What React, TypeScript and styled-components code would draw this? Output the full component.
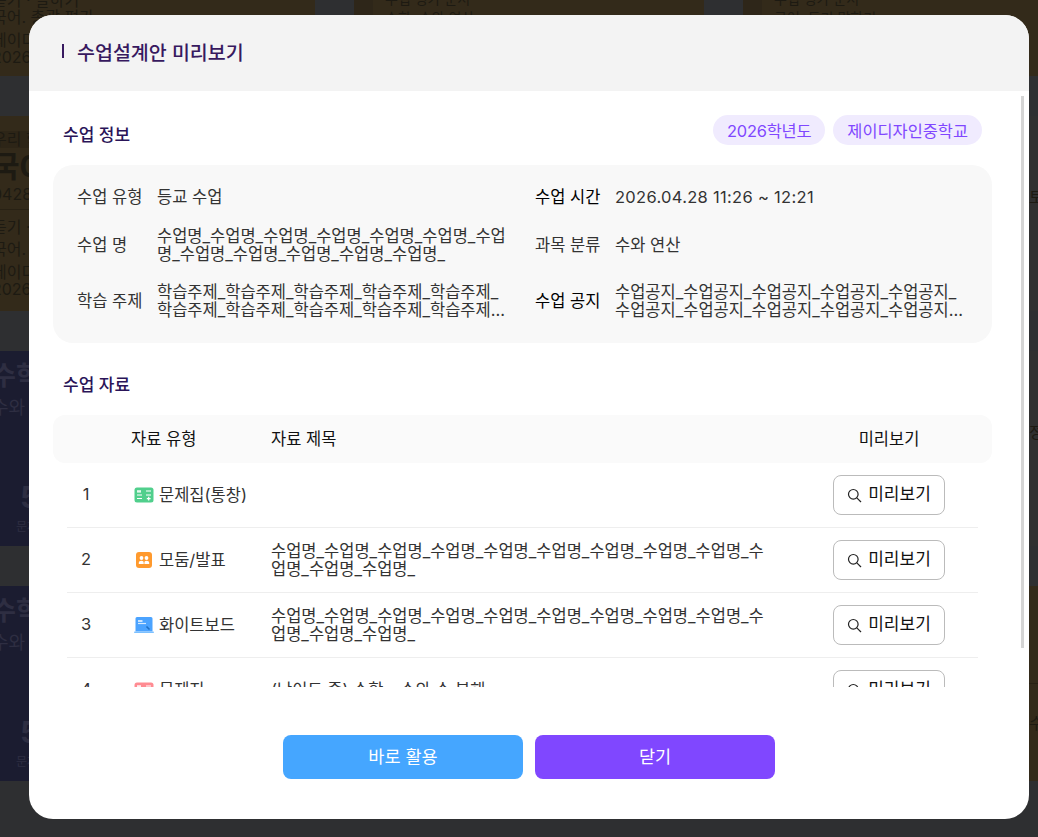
import styled, { createGlobalStyle } from "styled-components";

const GlobalStyle = createGlobalStyle`
  html, body {
    margin: 0;
    height: 100%;
    background: #2e2f31;
    font-family: "Inter", "Noto Sans CJK KR", sans-serif;
  }
  * {
    box-sizing: border-box;
  }
`;

const Page = styled.div`
  position: relative;
  width: 1038px;
  height: 837px;
  overflow: hidden;
  background: #2e2f31;
`;

// the dimmed dashboard behind the dialog
const BackGrid = styled.div`
  display: grid;
  grid-template-columns: repeat(3, 350px);
  grid-auto-rows: 195px;
  column-gap: 39px;
  row-gap: 40px;
  margin-left: -35px;
  margin-top: -119px;
  color: #1d1a12;
`;

const tones = {
  brown: "#332a1a",
  navy: "#1b1c30",
  gray: "#303030",
};

const BackCard = styled.div<{ $tone: keyof typeof tones; $inset?: number }>`
  background: ${(p) => tones[p.$tone]};
  border-left: 19px solid ${(p) => (p.$tone === "brown" ? "#2e2619" : "rgba(0,0,0,0.08)")};
  padding: 12px 0 0 ${(p) => p.$inset ?? 8}px;
  overflow: hidden;
  white-space: nowrap;
`;

const BackLine = styled.div<{ $size?: number; $bold?: boolean; $top?: number; $left?: number; $dim?: boolean; $band?: boolean }>`
  font-size: ${(p) => p.$size ?? 16}px;
  font-weight: ${(p) => (p.$bold ? 700 : 400)};
  margin-top: ${(p) => p.$top ?? 0}px;
  padding-left: ${(p) => p.$left ?? 0}px;
  line-height: ${(p) => (p.$size && p.$size > 20 ? "1.2" : "17px")};
  color: ${(p) => (p.$dim ? "#2e2e42" : "inherit")};
  background: ${(p) => (p.$band ? "rgba(0,0,0,0.1)" : "none")};
`;

const BackRule = styled.div<{ $top: number }>`
  height: 1px;
  margin-top: ${(p) => p.$top}px;
  background: rgba(0, 0, 0, 0.2);
`;

const Overlay = styled.div`
  position: absolute;
  inset: 0;
`;

const Modal = styled.div`
  position: relative;
  display: flex;
  flex-direction: column;
  width: 1000px;
  height: 804px;
  margin: 15px 0 0 29px;
  background: #fff;
  border-radius: 24px;
  overflow: hidden;
`;

const ModalHeader = styled.div`
  display: flex;
  align-items: center;
  gap: 13px;
  flex: 0 0 76px;
  padding: 0 0 4px 33px;
  background: #f3f3f3;
`;

const TitleBar = styled.span`
  width: 2px;
  height: 14px;
  background: #37195f;
`;

const ModalTitle = styled.h2`
  margin: 0;
  font-size: 19.5px;
  font-weight: 500;
  color: #37195f;
`;

const ModalBody = styled.div`
  flex: 0 0 596px;
  padding-top: 24px;
  overflow: hidden;
`;

const ScrollThumb = styled.div`
  position: absolute;
  left: 992px;
  top: 81px;
  width: 3px;
  height: 552px;
  background: #d4d4d4;
`;

const SectionHead = styled.div<{ $top?: number }>`
  display: flex;
  align-items: center;
  justify-content: space-between;
  height: 30px;
  margin-top: ${(p) => p.$top ?? 0}px;
  padding: 0 47px 0 34px;
`;

const SectionTitle = styled.h3`
  margin: 6px 0 0;
  font-size: 17px;
  font-weight: 500;
  color: #2a1458;
`;

const Chips = styled.div`
  display: flex;
  gap: 8px;
`;

const Chip = styled.span<{ $tight?: boolean }>`
  display: flex;
  align-items: center;
  height: 30px;
  padding: 0 14px 1px;
  border-radius: 15px;
  background: #f0ebfe;
  color: #8047ff;
  font-size: 16.4px;
  letter-spacing: ${(p) => (p.$tight ? "-0.2px" : "0")};
`;

const InfoCard = styled.div`
  display: grid;
  grid-template-columns: 429px 429px;
  grid-template-rows: 24px 40px 40px;
  gap: 16px 29px;
  height: 178px;
  margin: 20px 37px 0 24px;
  padding: 20px 24px 22px;
  border-radius: 20px;
  background: #f8f8f8;
`;

const InfoItem = styled.div`
  display: flex;
  align-items: center;
  color: #333;
  font-size: 16.5px;
  line-height: 18px;
`;

const InfoLabel = styled.span<{ $bold?: boolean }>`
  flex: 0 0 80px;
  color: ${(p) => (p.$bold ? "#000" : "#333")};
`;

const InfoValue = styled.span<{ $spaced?: boolean }>`
  flex: 1;
  min-width: 0;
  display: -webkit-box;
  -webkit-box-orient: vertical;
  -webkit-line-clamp: 2;
  overflow: hidden;
  letter-spacing: ${(p) => (p.$spaced ? "0.3px" : "0")};
`;

const TableHead = styled.div`
  display: grid;
  grid-template-columns: 78px 140px 1fr 112px;
  align-items: center;
  height: 48px;
  margin: 20px 37px 0 24px;
  padding: 0 47px 3px 0;
  border-radius: 12px;
  background: #fafafa;
  color: #111;
  font-size: 16.5px;
`;

const HeadCenter = styled.span`
  text-align: center;
`;

const RowList = styled.div`
  margin: 0 51px 0 38px;
`;

const Row = styled.div`
  display: grid;
  grid-template-columns: 67px 137px 1fr 112px;
  align-items: center;
  height: 65px;
  padding-right: 33px;
  border-bottom: 1px solid #eee;
  color: #333;
  font-size: 16.5px;
  line-height: 18px;
`;

const RowNo = styled.span`
  width: 38px;
  padding-bottom: 2px;
  text-align: center;
`;

const TypeCell = styled.span`
  display: flex;
  align-items: center;
  gap: 5px;
`;

const RowName = styled.span`
  max-width: 500px;
`;

const PreviewButton = styled.button`
  display: flex;
  align-items: center;
  justify-content: center;
  gap: 6px;
  width: 112px;
  height: 40px;
  padding: 0;
  border: 1px solid #bbb;
  border-radius: 8px;
  background: #fff;
  color: #111;
  font-family: inherit;
  font-size: 17px;
`;

const PreviewLabel = styled.span`
  padding-bottom: 6px;
`;

const ModalFooter = styled.div`
  display: flex;
  justify-content: center;
  gap: 12px;
  padding-top: 48px;
`;

const FooterButton = styled.button<{ $purple?: boolean }>`
  width: 240px;
  height: 44px;
  padding: 0 0 4px;
  border: 0;
  border-radius: 8px;
  background: ${(p) => (p.$purple ? "#8047ff" : "#45a6ff")};
  color: #fff;
  font-family: inherit;
  font-size: 17.5px;
`;

const SearchIcon = () => (
  <svg width="15" height="15" viewBox="0 0 15 15" fill="none" stroke="#222" strokeWidth="1.2">
    <circle cx="6.3" cy="6.3" r="4.8" />
    <path d="M9.8 9.8 L14 14" />
  </svg>
);

const BookIcon = ({ color }: { color: string }) => (
  <svg width="20" height="16" viewBox="0 0 20 16">
    <rect x="0.5" y="0.5" width="19" height="15" rx="2.5" fill={color} />
    <path d="M3 3.2h4v2.4h-4z" fill="#fff" opacity="0.85" />
    <path d="M12 4h5M3 8h5M12 8h5M3 11.5h5" stroke="#fff" strokeWidth="1.2" />
    <path d="M12.8 11.6h3.8M14.7 9.8v3.6" stroke="#fff" strokeWidth="1.2" />
  </svg>
);

const GroupIcon = () => (
  <svg width="20" height="18" viewBox="0 0 20 18">
    <rect x="2" y="1" width="16" height="16" rx="3" fill="#ff9a2e" />
    <circle cx="7.5" cy="7" r="1.9" fill="#fff" />
    <circle cx="12.5" cy="7" r="1.9" fill="#fff" />
    <path d="M4.8 13v-1.3c0-1.2 1-2 2.7-2s2.2 0.8 2.2 2V13zM10.4 13v-1.3c0-1.2 0.5-2 2.1-2s2.7 0.8 2.7 2V13z" fill="#fff" />
  </svg>
);

const BoardIcon = () => (
  <svg width="20" height="18" viewBox="0 0 20 18">
    <path d="M1.5 2.5a1.5 1.5 0 0 1 1.5-1.5h14a1.5 1.5 0 0 1 1.5 1.5v13h-17z" fill="#4ba3ff" />
    <rect x="0" y="15.5" width="20" height="1.5" rx="0.7" fill="#7cc0ff" />
    <path d="M4 5h4.5" stroke="#fff" strokeWidth="1.4" />
    <path d="M4 7.5h8" stroke="#d7ebff" strokeWidth="1.2" />
    <path d="M12.5 10.5l3 3" stroke="#1f6fc4" strokeWidth="1.6" />
  </svg>
);

const lessonName = "수업명_".repeat(12);
const topic = "학습주제_".repeat(12);
const notice = "수업공지_".repeat(12);
const cardName = "수업명_".repeat(12);

const rows = [
  { no: 1, icon: <BookIcon color="#50cf8c" />, type: "문제집(통창)", name: "" },
  { no: 2, icon: <GroupIcon />, type: "모둠/발표", name: cardName },
  { no: 3, icon: <BoardIcon />, type: "화이트보드", name: cardName },
  { no: 4, icon: <BookIcon color="#ff8b92" />, type: "문제지", name: "(난이도 중) 수학 - 수와 수 분해" },
];

const NavyCard = () => (
  <BackCard $tone="navy">
    <BackLine $size={26} $bold $dim $top={-3}>수학</BackLine>
    <BackLine $size={18} $dim $top={8}>수와 연산</BackLine>
    <BackLine $size={30} $bold $dim $top={63} $left={28}>5</BackLine>
    <BackLine $size={12} $dim $top={3} $left={24}>문제</BackLine>
  </BackCard>
);

const Background = () => (
  <BackGrid>
    <BackCard $tone="brown">
      <BackLine $top={99}>듣기 · 말하기</BackLine>
      <BackLine>국어. 총괄 평가</BackLine>
      <BackLine $top={6}>제이디자인</BackLine>
      <BackLine>2026.04.28</BackLine>
    </BackCard>
    <BackCard $tone="brown" $inset={12}>
      <BackLine $top={97} $size={14}>수업 평가 문서</BackLine>
      <BackLine $top={2} $size={14}>수학. 수와 연산</BackLine>
    </BackCard>
    <BackCard $tone="brown" $inset={12}>
      <BackLine $top={97} $size={14}>수업 평가 문서</BackLine>
      <BackLine $top={2} $size={14}>국어. 듣기 말하기</BackLine>
    </BackCard>

    <BackCard $tone="brown">
      <BackLine $top={3} $band>우리 학교</BackLine>
      <BackLine $size={30} $bold>국06</BackLine>
      <BackLine $top={2}>0428</BackLine>
      <BackRule $top={6} />
      <BackLine $top={9}>듣기 · 말하기</BackLine>
      <BackLine $top={5}>국어. 듣기</BackLine>
      <BackLine $top={6}>제이디자인</BackLine>
      <BackLine>2026.04.28</BackLine>
    </BackCard>
    <BackCard $tone="gray" />
    <BackCard $tone="gray" $inset={267}>
      <BackLine $top={61}>토론</BackLine>
    </BackCard>

    <NavyCard />
    <BackCard $tone="gray" />
    <BackCard $tone="gray" $inset={267}>
      <BackLine $top={61}>정리</BackLine>
    </BackCard>

    <NavyCard />
    <BackCard $tone="gray" />
    <BackCard $tone="brown" $inset={267}>
      <BackRule $top={85} />
      <BackLine $top={31}>수학</BackLine>
    </BackCard>
  </BackGrid>
);

export default function App() {
  return (
    <Page>
      <GlobalStyle />
      <Background />
      <Overlay>
        <Modal>
          <ModalHeader>
            <TitleBar />
            <ModalTitle>수업설계안 미리보기</ModalTitle>
          </ModalHeader>
          <ModalBody>
            <SectionHead>
              <SectionTitle>수업 정보</SectionTitle>
              <Chips>
                <Chip $tight>2026학년도</Chip>
                <Chip>제이디자인중학교</Chip>
              </Chips>
            </SectionHead>
            <InfoCard>
              <InfoItem>
                <InfoLabel>수업 유형</InfoLabel>
                <InfoValue>등교 수업</InfoValue>
              </InfoItem>
              <InfoItem>
                <InfoLabel $bold>수업 시간</InfoLabel>
                <InfoValue $spaced>2026.04.28 11:26 ~ 12:21</InfoValue>
              </InfoItem>
              <InfoItem>
                <InfoLabel>수업 명</InfoLabel>
                <InfoValue>{lessonName}</InfoValue>
              </InfoItem>
              <InfoItem>
                <InfoLabel>과목 분류</InfoLabel>
                <InfoValue>수와 연산</InfoValue>
              </InfoItem>
              <InfoItem>
                <InfoLabel>학습 주제</InfoLabel>
                <InfoValue>{topic}</InfoValue>
              </InfoItem>
              <InfoItem>
                <InfoLabel $bold>수업 공지</InfoLabel>
                <InfoValue>{notice}</InfoValue>
              </InfoItem>
            </InfoCard>

            <SectionHead $top={22}>
              <SectionTitle>수업 자료</SectionTitle>
            </SectionHead>
            <TableHead>
              <span />
              <span>자료 유형</span>
              <span>자료 제목</span>
              <HeadCenter>미리보기</HeadCenter>
            </TableHead>
            <RowList>
              {rows.map((row) => (
                <Row key={row.no}>
                  <RowNo>{row.no}</RowNo>
                  <TypeCell>
                    {row.icon}
                    {row.type}
                  </TypeCell>
                  <RowName>{row.name}</RowName>
                  <PreviewButton>
                    <SearchIcon />
                    <PreviewLabel>미리보기</PreviewLabel>
                  </PreviewButton>
                </Row>
              ))}
            </RowList>
          </ModalBody>
          <ScrollThumb />
          <ModalFooter>
            <FooterButton>바로 활용</FooterButton>
            <FooterButton $purple>닫기</FooterButton>
          </ModalFooter>
        </Modal>
      </Overlay>
    </Page>
  );
}
